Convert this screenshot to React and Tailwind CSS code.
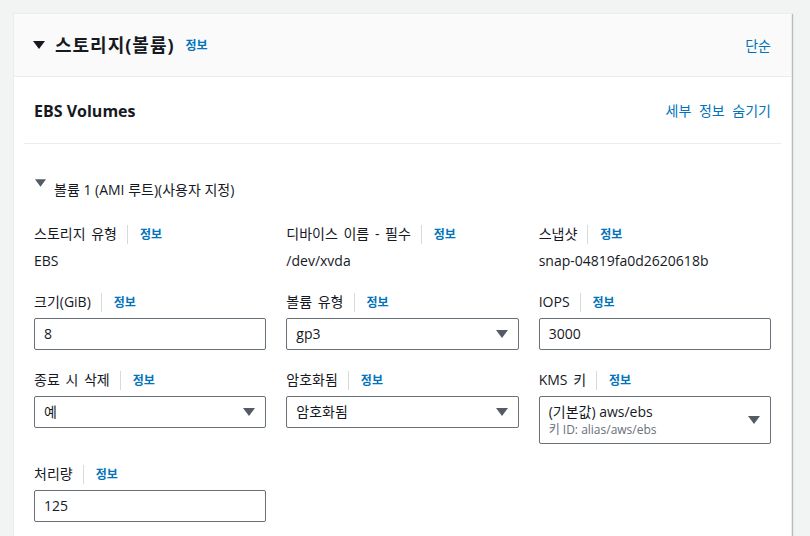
import React from 'react';

const Caret = ({ className }) => (
  <svg className={className} width="12" height="8" viewBox="0 0 12 8">
    <path d="M0 0 L12 0 L6 8 Z" fill="currentColor" />
  </svg>
);

const Label = ({ text }) => (
  <div className="flex items-center h-[22px] mb-[5px]">
    <span className="text-[14px] text-[#16191f] [word-spacing:2px]">{text}</span>
    <span className="ml-[10px] mr-[12px] h-[19px] w-px bg-[#d5dbdb]"></span>
    <a className="text-[12px] font-bold text-[#0073bb] mt-[2px]">정보</a>
  </div>
);

const TextBox = ({ value }) => (
  <div className="h-[32px] flex items-center border border-[#687078] rounded-[2px] px-[9px] text-[14px] text-[#16191f]">
    {value}
  </div>
);

const SelectBox = ({ value }) => (
  <div className="h-[32px] flex items-center justify-between border border-[#687078] rounded-[2px] pl-[9px] pr-[10px] text-[14px] text-[#16191f]">
    <span>{value}</span>
    <Caret className="text-[#545b64]" />
  </div>
);

const App = () => {
  return (
    <div
      className="min-h-screen bg-[#f2f3f3] pt-[13px] pl-[13px]"
      style={{ fontFamily: '"Open Sans", "Noto Sans CJK KR", sans-serif' }}
    >
      <div className="w-[779px] bg-white border border-[#eaeded] shadow-[1px_1px_1px_0_rgba(0,28,36,0.25)]">
        {/* header */}
        <div className="h-[63px] flex items-center justify-between bg-[#fafafa] border-b border-[#eaeded] pl-[19px] pr-[20px]">
          <div className="flex items-center">
            <Caret className="text-[#16191f] mr-[10px]" />
            <h2 className="text-[18px] font-bold text-[#16191f] tracking-[1px]">스토리지(볼륨)</h2>
            <a className="ml-[11px] mt-[2px] text-[12px] font-bold text-[#0073bb]">정보</a>
          </div>
          <a className="text-[14px] text-[#0073bb]">단순</a>
        </div>

        {/* EBS volumes */}
        <div className="h-[66px] flex items-center justify-between pl-[20px] pr-[20px] pt-[1px]">
          <h3 className="text-[16px] font-bold text-[#16191f]">EBS Volumes</h3>
          <a className="text-[14px] text-[#0073bb] [word-spacing:4px]">세부 정보 숨기기</a>
        </div>
        <div className="mx-[10px] h-px bg-[#eaeded]"></div>

        <div className="px-[20px] pt-[34px] pb-[14px]">
          <div className="flex items-start h-[22px]">
            <Caret className="text-[#545b64] mt-[1px] ml-[1px] mr-[8px] w-[11px]" />
            <span className="text-[14px] leading-[22px] text-[#16191f] mt-[1px]">볼륨 1 (AMI 루트)(사용자 지정)</span>
          </div>

          <div className="grid grid-cols-3 gap-x-[20px] gap-y-[19px] mt-[23px] leading-[22px]">
            <div>
              <Label text="스토리지 유형" />
              <div className="text-[14px] text-[#16191f] leading-[22px]">EBS</div>
            </div>
            <div>
              <Label text="디바이스 이름 - 필수" />
              <div className="text-[14px] text-[#16191f] leading-[22px]">/dev/xvda</div>
            </div>
            <div>
              <Label text="스냅샷" />
              <div className="text-[14px] text-[#16191f] leading-[22px]">snap-04819fa0d2620618b</div>
            </div>

            <div>
              <Label text="크기(GiB)" />
              <TextBox value="8" />
            </div>
            <div>
              <Label text="볼륨 유형" />
              <SelectBox value="gp3" />
            </div>
            <div>
              <Label text="IOPS" />
              <TextBox value="3000" />
            </div>

            <div>
              <Label text="종료 시 삭제" />
              <SelectBox value="예" />
            </div>
            <div>
              <Label text="암호화됨" />
              <SelectBox value="암호화됨" />
            </div>
            <div>
              <Label text="KMS 키" />
              <div className="h-[48px] flex items-center justify-between border border-[#687078] rounded-[2px] pl-[9px] pr-[10px]">
                <div className="flex flex-col">
                  <span className="text-[14px] leading-[20px] text-[#16191f]">(기본값) aws/ebs</span>
                  <span className="text-[12px] leading-[16px] text-[#687078]">키 ID: alias/aws/ebs</span>
                </div>
                <Caret className="text-[#545b64]" />
              </div>
            </div>

            <div>
              <Label text="처리량" />
              <TextBox value="125" />
            </div>
          </div>
        </div>
      </div>
    </div>
  );
};

export default App;
